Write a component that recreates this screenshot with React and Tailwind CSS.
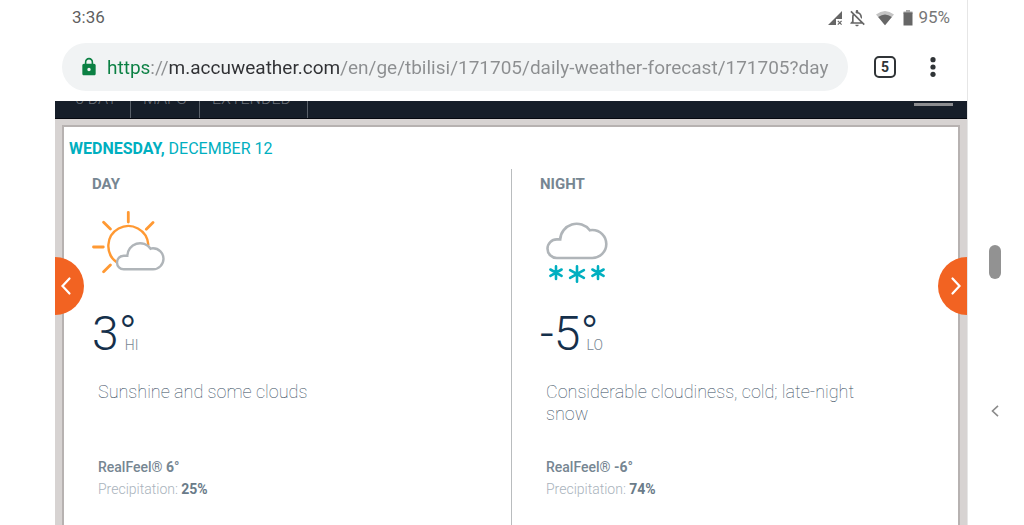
import { MdLock, MdOutlineNotificationsOff } from "react-icons/md";

const navItems = [
  { label: "5 DAY", cell: "w-[76px] pl-5" },
  { label: "MAPS", cell: "w-[69px] pl-3" },
  { label: "EXTENDED", cell: "w-[108px] pl-3" },
];

function StatusBar() {
  return (
    <div className="flex h-9 items-center justify-between px-[17px] text-[17px] text-[#5f5f5f]">
      <time>3:36</time>
      <div className="flex items-center text-[#666]">
        <svg className="h-4 w-4" viewBox="0 0 16 16" fill="currentColor" aria-hidden="true">
          <path d="M15 1V9H9V15H1Z" />
          <path d="M10.8 10.8L14.6 14.6M14.6 10.8L10.8 14.6" stroke="currentColor" strokeWidth="1.2" />
        </svg>
        <MdOutlineNotificationsOff className="ml-1 h-5 w-5" aria-hidden="true" />
        <svg className="ml-2 h-4 w-5" viewBox="0 0 20 16" aria-hidden="true">
          <path d="M1 4.5Q10 -2.5 19 4.5L10 15.3Z" fill="#c4c4c4" />
          <path d="M3.2 7Q10 2 16.8 7L10 15.3Z" fill="#666" />
        </svg>
        <svg className="ml-2 h-4 w-2.5" viewBox="0 0 10 16" aria-hidden="true">
          <path d="M3 0H7V1.5H9.5V4H.5V1.5H3Z" fill="#aaa" />
          <path d="M.5 2.5H9.5V15.5H.5Z" fill="#666" />
        </svg>
        <span className="ml-[5px] text-[17px] text-[#777]">95%</span>
      </div>
    </div>
  );
}

function AddressBar() {
  return (
    <div className="flex h-[65px] items-center pb-[3px] pl-[7px] pr-6">
      <label className="flex h-12 min-w-0 flex-1 items-center rounded-full bg-[#f1f3f4] pl-[17px] pr-3">
        <MdLock className="h-5 w-5 shrink-0 text-[#0b8043]" aria-hidden="true" />
        <input
          aria-label="Address"
          type="text"
          defaultValue="https://m.accuweather.com/en/ge/tbilisi/171705/daily-weather-forecast/171705?day"
          className="ml-2 min-w-0 flex-1 bg-[linear-gradient(90deg,#0b8043_0px,#0b8043_43px,#8c8e90_43px,#8c8e90_62px,#303134_62px,#303134_234px,#8c8e90_234px)] bg-clip-text pt-0.5 text-[19px] text-transparent outline-none"
        />
      </label>
      <button
        aria-label="5 open tabs"
        className="ml-[26px] flex h-[22px] w-[22px] items-center justify-center rounded-[5px] border-2 border-[#303437] text-sm font-bold leading-none text-[#303437]"
      >
        5
      </button>
      <button aria-label="More options" className="ml-[27px] flex w-5 justify-center text-[#303437]">
        <svg className="h-5 w-2" viewBox="0 0 8 20" fill="currentColor">
          <circle cx="4" cy="2.7" r="2.6" />
          <circle cx="4" cy="10" r="2.6" />
          <circle cx="4" cy="17.3" r="2.6" />
        </svg>
      </button>
    </div>
  );
}

function SiteNav() {
  return (
    <nav className="flex h-[18px] justify-between overflow-hidden border-b border-[#05080f] bg-[#161e29] pr-3.5">
      <div className="flex">
        {navItems.map((item) => (
          <a
            key={item.label}
            href="#"
            className={`flex h-full items-end border-r border-[#596069] pb-[9px] text-base font-light leading-5 text-[#6a7078] ${item.cell}`}
          >
            {item.label}
          </a>
        ))}
      </div>
      <button aria-label="Menu" className="flex w-[39px] items-start pt-[2px]">
        <span className="h-[3px] w-full bg-[#8c8d90]" />
      </button>
    </nav>
  );
}

function SunCloudIcon() {
  return (
    <svg className="h-[70px] w-[76px]" viewBox="0 0 76 70" fill="none" strokeWidth="2.4" strokeLinecap="round" aria-hidden="true">
      <g stroke="#ff9933">
        <path d="M56.3 34.7A20 20 0 1 0 24.7 52.3" />
        <path d="M36.3 2.3V12M1.5 37H11.3M11.6 12.3L18.4 19.1M61 12.5L54.3 19.2M11.6 61.7L18.4 54.9" strokeWidth="2.8" />
      </g>
      <path
        d="M31.8 59.3A6.8 6.8 0 0 1 31.8 45.7H35.3A12.8 12.8 0 0 1 58.6 38.7Q59.5 38.3 61 38.3A10.5 10.5 0 0 1 61 59.3Z"
        stroke="#b0b5b9"
      />
    </svg>
  );
}

function SnowIcon() {
  const flake = "M0 -6.3V6.3M-5.6 -3.2L5.6 3.2M-5.6 3.2L5.6 -3.2";
  return (
    <svg className="h-[76px] w-[76px]" viewBox="0 0 76 76" fill="none" strokeWidth="2.6" strokeLinecap="round" aria-hidden="true">
      <path
        d="M16.8 48A9.3 9.3 0 0 1 16.8 29.4H20.2A16.5 16.5 0 0 1 49.8 20.3Q51 20 52.3 20A14 14 0 0 1 52.3 48Z"
        stroke="#b0b5b9"
      />
      <g stroke="#00afc0">
        <path d={flake} transform="translate(16 62.7)" />
        <path d="M0 -7.8V7.8M-6.9 -3.9L6.9 3.9M-6.9 3.9L6.9 -3.9" transform="translate(37 64)" />
        <path d={flake} transform="translate(58 62.7)" />
      </g>
    </svg>
  );
}

function Period({ title, icon, temperature, suffix, description, realFeel, precipitation }) {
  return (
    <section className="pl-7 pr-20">
      <h3 className="mt-[5px] text-[15px] font-bold leading-5 text-[#768692]">{title}</h3>
      <div className="mt-4 h-[100px]">{icon}</div>
      <p className="flex items-baseline text-[#15304b]">
        <span className="text-5xl font-light">{temperature}°</span>
        <span className="-ml-3 text-sm font-light text-[#768692]">{suffix}</span>
      </p>
      <div className="pl-1.5">
        <p className="mt-[23px] h-[66px] text-lg font-thin leading-[22px] text-[#34495c]">{description}</p>
        <p className="mt-[9px] text-sm font-medium leading-[22px] text-[#768692]">
          RealFeel® <b>{realFeel}°</b>
        </p>
        <p className="text-sm font-light leading-[22px] text-[#a9b3bc]">
          Precipitation: <b className="font-bold text-[#6a7b89]">{precipitation}%</b>
        </p>
      </div>
    </section>
  );
}

function Chevron({ d }) {
  return (
    <svg className="h-5 w-3" viewBox="0 0 12 20" fill="none" stroke="currentColor" strokeWidth="2.2" strokeLinecap="round">
      <path d={d} />
    </svg>
  );
}

export default function App() {
  return (
    <div className="flex h-screen overflow-hidden bg-white font-[Roboto,sans-serif]">
      <div className="ml-[55px] flex min-w-0 flex-1 flex-col border-r border-[#e6e6e6]">
        <StatusBar />
        <AddressBar />
        <SiteNav />
        <main className="relative flex flex-1 flex-col bg-[#d7d3d2] px-[7px] pt-[6px]">
          <article className="flex flex-1 flex-col border-2 border-b-0 border-[#b7b2b1] bg-white">
            <h2 className="pl-[5px] pt-[11px] text-base leading-[22px] text-[#00afc0]">
              <b>WEDNESDAY,</b> DECEMBER 12
            </h2>
            <div className="mt-[9px] grid flex-1 grid-cols-[449fr_447fr] divide-x divide-[#b9bcbe]">
              <Period
                title="DAY"
                icon={<SunCloudIcon />}
                temperature="3"
                suffix="HI"
                description="Sunshine and some clouds"
                realFeel="6"
                precipitation="25"
              />
              <Period
                title="NIGHT"
                icon={<SnowIcon />}
                temperature="-5"
                suffix="LO"
                description="Considerable cloudiness, cold; late-night snow"
                realFeel="-6"
                precipitation="74"
              />
            </div>
          </article>
          <button
            aria-label="Previous day"
            className="absolute left-0 top-[138px] flex h-[58px] w-[29px] items-center rounded-r-full bg-[#f26322] pl-[5px] text-white"
          >
            <Chevron d="M9.5 2.5L2.5 10L9.5 17.5" />
          </button>
          <button
            aria-label="Next day"
            className="absolute right-0 top-[138px] flex h-[58px] w-[29px] items-center justify-end rounded-l-full bg-[#f26322] pr-[5px] text-white"
          >
            <Chevron d="M2.5 2.5L9.5 10L2.5 17.5" />
          </button>
        </main>
      </div>
      <aside className="flex w-14 flex-col items-center pr-0.5 pt-[245px]">
        <button aria-label="Home" className="h-[34px] w-3 rounded-full bg-[#929292]" />
        <button aria-label="Back" className="mt-[125px] text-[#8a8a8a]">
          <svg className="h-[14px] w-[10px]" viewBox="0 0 10 14" fill="none" stroke="currentColor" strokeWidth="1.6">
            <path d="M8 1.8L2.5 7L8 12.2" />
          </svg>
        </button>
      </aside>
    </div>
  );
}
